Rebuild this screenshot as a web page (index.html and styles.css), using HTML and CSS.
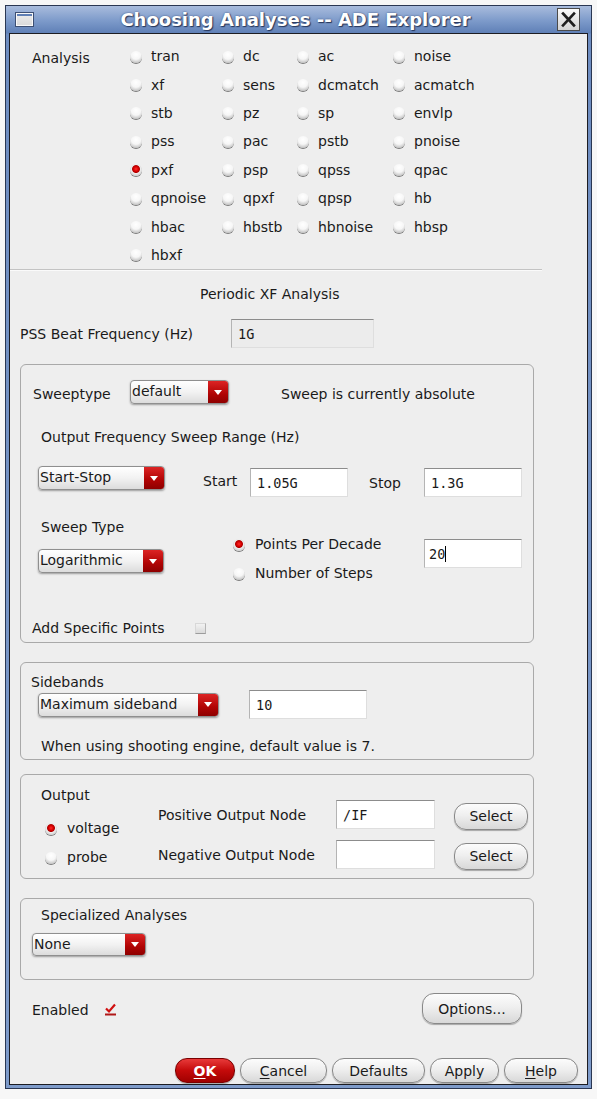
FILE: index.html
```html
<!DOCTYPE html>
<html>
<head>
<meta charset="utf-8">
<title>Choosing Analyses -- ADE Explorer</title>
<link rel="stylesheet" href="styles.css">
</head>
<body>
<div class="window">
  <div class="titlebar">
    <span class="win-icon"></span>
    <span class="title">Choosing Analyses -- ADE Explorer</span>
    <span class="close-btn">
      <svg width="21" height="21" viewBox="0 0 21 21"><path d="M5 4.5 L16 16.5 M16 4.5 L5 16.5" stroke="#1e1e1e" stroke-width="2.6" stroke-linecap="square" fill="none"/></svg>
    </span>
  </div>
  <div class="content">
    <div class="analysis">
      <div class="analysis-label">Analysis</div>
      <div class="analysis-grid">
        <span class="opt"><span class="radio"></span>tran</span>
        <span class="opt"><span class="radio"></span>dc</span>
        <span class="opt"><span class="radio"></span>ac</span>
        <span class="opt"><span class="radio"></span>noise</span>
        <span class="opt"><span class="radio"></span>xf</span>
        <span class="opt"><span class="radio"></span>sens</span>
        <span class="opt"><span class="radio"></span>dcmatch</span>
        <span class="opt"><span class="radio"></span>acmatch</span>
        <span class="opt"><span class="radio"></span>stb</span>
        <span class="opt"><span class="radio"></span>pz</span>
        <span class="opt"><span class="radio"></span>sp</span>
        <span class="opt"><span class="radio"></span>envlp</span>
        <span class="opt"><span class="radio"></span>pss</span>
        <span class="opt"><span class="radio"></span>pac</span>
        <span class="opt"><span class="radio"></span>pstb</span>
        <span class="opt"><span class="radio"></span>pnoise</span>
        <span class="opt"><span class="radio radio-on"></span>pxf</span>
        <span class="opt"><span class="radio"></span>psp</span>
        <span class="opt"><span class="radio"></span>qpss</span>
        <span class="opt"><span class="radio"></span>qpac</span>
        <span class="opt"><span class="radio"></span>qpnoise</span>
        <span class="opt"><span class="radio"></span>qpxf</span>
        <span class="opt"><span class="radio"></span>qpsp</span>
        <span class="opt"><span class="radio"></span>hb</span>
        <span class="opt"><span class="radio"></span>hbac</span>
        <span class="opt"><span class="radio"></span>hbstb</span>
        <span class="opt"><span class="radio"></span>hbnoise</span>
        <span class="opt"><span class="radio"></span>hbsp</span>
        <span class="opt"><span class="radio"></span>hbxf</span>
      </div>
    </div>
    <div class="sep"></div>
    <div class="heading">Periodic XF Analysis</div>
    <div class="pss-row">
      <span class="pss-label">PSS Beat Frequency (Hz)</span>
      <span class="field field-disabled field-pss">1G</span>
    </div>

    <div class="group group-sweep">
      <div class="sw-row1">
        <span class="sw-label">Sweeptype</span>
        <span class="combo combo-sweeptype"><span class="combo-text">default</span><span class="combo-arrow"></span></span>
        <span class="sw-note">Sweep is currently absolute</span>
      </div>
      <div class="sub-title sub-range">Output Frequency Sweep Range (Hz)</div>
      <div class="sw-row3">
        <span class="combo combo-startstop"><span class="combo-text">Start-Stop</span><span class="combo-arrow"></span></span>
        <span class="lbl-start">Start</span>
        <span class="field field-range">1.05G</span>
        <span class="lbl-stop">Stop</span>
        <span class="field field-range">1.3G</span>
      </div>
      <div class="sub-title sub-type">Sweep Type</div>
      <div class="sw-row5">
        <span class="combo combo-log"><span class="combo-text">Logarithmic</span><span class="combo-arrow"></span></span>
        <div class="radio-stack">
          <span class="ropt"><span class="radio radio-on"></span>Points Per Decade</span>
          <span class="ropt"><span class="radio"></span>Number of Steps</span>
        </div>
        <span class="field field-range field-ppd">20<span class="caret"></span></span>
      </div>
      <div class="sw-add">
        <span class="add-label">Add Specific Points</span>
        <span class="checkbox"></span>
      </div>
    </div>

    <div class="group group-side">
      <div class="side-title">Sidebands</div>
      <div class="side-row">
        <span class="combo combo-side"><span class="combo-text">Maximum sideband</span><span class="combo-arrow"></span></span>
        <span class="field field-side">10</span>
      </div>
      <div class="side-note">When using shooting engine, default value is 7.</div>
    </div>

    <div class="group group-out">
      <div class="out-left">
        <div class="out-title">Output</div>
        <span class="ropt ropt-voltage"><span class="radio radio-on"></span>voltage</span>
        <span class="ropt ropt-probe"><span class="radio"></span>probe</span>
      </div>
      <div class="out-right">
        <div class="node-row">
          <span class="node-label">Positive Output Node</span>
          <span class="field field-node">/IF</span>
          <span class="btn btn-select">Select</span>
        </div>
        <div class="node-row node-row2">
          <span class="node-label">Negative Output Node</span>
          <span class="field field-node"></span>
          <span class="btn btn-select">Select</span>
        </div>
      </div>
    </div>

    <div class="group group-spec">
      <div class="spec-title">Specialized Analyses</div>
      <span class="combo combo-none"><span class="combo-text">None</span><span class="combo-arrow"></span></span>
    </div>

    <div class="enabled-row">
      <span class="enabled-label">Enabled</span>
      <span class="check-on">
        <svg width="13" height="13" viewBox="0 0 13 13"><path d="M2 5.5 L5 8.5 L11 1.5" stroke="#d01010" stroke-width="2.2" fill="none"/><path d="M1 11.5 H12" stroke="#b01818" stroke-width="2"/></svg>
      </span>
      <span class="btn btn-options">Options...</span>
    </div>

    <div class="bottom-buttons">
      <span class="btn btn-ok"><u>O</u>K</span>
      <span class="btn btn-cancel"><u>C</u>ancel</span>
      <span class="btn btn-defaults">Defaults</span>
      <span class="btn btn-apply">Apply</span>
      <span class="btn btn-help"><u>H</u>elp</span>
    </div>
  </div>
</div>
</body>
</html>
```

FILE: styles.css
```css
html, body {
  margin: 0;
  padding: 0;
  background: #f7f7f7;
}
body {
  font-family: "DejaVu Sans", "Liberation Sans", sans-serif;
  font-size: 14px;
  color: #1a1a1a;
}
.window {
  margin: 5px 0 0 5px;
  width: 587px;
  height: 1084px;
  box-sizing: border-box;
  border: 1px solid #2a3752;
  background: linear-gradient(#a9bcdd 0px, #7f9ccb 14px, #5f80b7 27px, #6d8cc0 28px, #7e9bca 100%);
  padding: 0 3px 3px 3px;
}
.titlebar {
  height: 27px;
  display: flex;
  align-items: center;
}
.win-icon {
  width: 17px;
  height: 13px;
  margin-left: 6px;
  border: 1px solid #3d4f73;
  background: linear-gradient(#5f7fb5 0 3px, #e9e9e9 3px, #d9d9d9 100%);
  box-shadow: inset 0 0 0 1px #f8f8f8;
}
.title {
  flex: 1;
  text-align: center;
  color: #ffffff;
  font-weight: bold;
  font-size: 18px;
  text-shadow: 1px 1px 1px #26365a, 0 0 2px #3b4f7c;
}
.close-btn {
  width: 21px;
  height: 21px;
  margin-right: 8px;
  border: 1px solid #4a4a4a;
  background: linear-gradient(#fafafa, #d2d2d2);
  display: flex;
}
.content {
  height: 1050px;
  border: 1px solid #1c1c22;
  background: #eeeeee;
  box-sizing: content-box;
}

/* Analysis radio grid */
.analysis {
  display: flex;
  padding-top: 8px;
}
.analysis-label {
  width: 98px;
  margin-left: 22px;
  line-height: 16px;
  padding-top: 8px;
}
.analysis-grid {
  display: grid;
  grid-template-columns: 92px 75px 96px 120px;
  grid-auto-rows: 28.4px;
}
.opt, .ropt {
  display: flex;
  align-items: center;
  gap: 10px;
  white-space: nowrap;
}
.opt { gap: 9px; }
.radio {
  width: 12px;
  height: 12px;
  border-radius: 50%;
  box-sizing: border-box;
  flex: none;
  background: radial-gradient(circle at 50% 30%, #ffffff 0, #f6f6f6 45%, #cfcfcf 72%, #8a8a8a 100%);
  box-shadow: 0 1px 0 #7c7c7c;
  margin-top: 1px;
}
.radio-on {
  background: radial-gradient(circle at 50% 42%, #ff2a2a 0, #d80000 26%, #b00000 38%, #eeeeee 48%, #cfcfcf 72%, #8a8a8a 100%);
}
.sep {
  width: 532px;
  height: 1px;
  background: #c3c3c3;
  border-bottom: 1px solid #fafafa;
}
.heading {
  margin: 15px 0 0 190px;
  line-height: 16px;
}
.pss-row {
  display: flex;
  align-items: center;
  margin: 17px 0 0 10px;
  height: 29px;
}
.pss-label {
  width: 211px;
}

/* fields */
.field {
  box-sizing: border-box;
  height: 29px;
  border: 1px solid #dedede;
  border-top-color: #8c8c8c;
  border-left-color: #b4b4b4;
  background: #ffffff;
  font-family: "DejaVu Sans Mono", "Liberation Mono", monospace;
  font-size: 13.5px;
  padding: 0 6px;
  display: flex;
  align-items: center;
}
.field-disabled {
  background: #ececec;
}
.field-pss { width: 143px; }
.field-range { width: 98px; }
.field-side { width: 118px; margin-left: 30px; }
.field-node { width: 99px; }
.caret {
  display: inline-block;
  width: 1px;
  height: 16px;
  background: #000;
  margin-left: 0;
}

/* combo boxes */
.combo {
  display: flex;
  height: 24px;
  box-sizing: border-box;
  border: 1px solid #8f8f8f;
  border-radius: 4px;
  background: linear-gradient(#ffffff, #f2f2f2 50%, #dcdcdc);
  box-shadow: 0 1px 2px rgba(0, 0, 0, 0.35);
  overflow: hidden;
  flex: none;
}
.combo-text {
  flex: 1;
  padding-left: 1px;
  line-height: 21px;
  white-space: nowrap;
}
.combo-arrow {
  width: 20px;
  background: linear-gradient(#dc2424, #b00404 60%, #8e0000);
  display: flex;
  align-items: center;
  justify-content: center;
}
.combo-arrow::after {
  content: "";
  border-left: 4px solid transparent;
  border-right: 4px solid transparent;
  border-top: 5px solid #ffffff;
}
.combo-sweeptype { width: 99px; }
.combo-startstop { width: 127px; }
.combo-log { width: 126px; }
.combo-side { width: 181px; }
.combo-none { width: 114px; height: 23px; }

/* groups */
.group {
  margin-left: 10px;
  width: 514px;
  box-sizing: border-box;
  border: 1px solid #a9a9a9;
  border-radius: 6px;
}
.group-sweep {
  margin-top: 16px;
  height: 279px;
}
.sw-row1 {
  display: flex;
  align-items: center;
  height: 24px;
  margin-top: 15px;
}
.sw-label {
  margin-left: 12px;
  width: 97px;
  padding-top: 4px;
}
.sw-note {
  margin-left: 52px;
  padding-top: 3px;
}
.sub-title {
  margin-left: 20px;
}
.sub-range {
  margin-top: 25px;
  line-height: 16px;
}
.sw-row3 {
  display: flex;
  align-items: center;
  height: 31px;
  margin-top: 21px;
}
.combo-startstop {
  margin-left: 17px;
  align-self: flex-start;
}
.lbl-start {
  margin-left: 38px;
  width: 47px;
  margin-bottom: 1px;
}
.lbl-stop {
  margin-left: 21px;
  width: 55px;
  margin-top: 3px;
}
.sw-row3 .field { margin-top: 2px; }
.sub-type {
  margin-top: 23px;
  line-height: 14px;
}
.sw-row5 {
  display: flex;
  align-items: flex-start;
  height: 49px;
}
.combo-log {
  margin-left: 17px;
  margin-top: 15px;
}
.radio-stack {
  margin-left: 69px;
  width: 191px;
  display: flex;
  flex-direction: column;
  gap: 9px;
}
.radio-stack .ropt {
  height: 20px;
  gap: 10px;
}
.field-ppd {
  margin-top: 5px;
  padding-left: 4px;
}
.sw-add {
  display: flex;
  align-items: center;
  margin: 37px 0 0 11px;
  height: 16px;
}
.add-label {
  width: 163px;
}
.checkbox {
  width: 11px;
  height: 11px;
  box-sizing: border-box;
  border: 1px solid #d8d8d8;
  border-bottom-color: #9c9c9c;
  border-right-color: #b4b4b4;
  background: linear-gradient(#f2f2f2, #dadada);
}

.group-side {
  margin-top: 19px;
  height: 98px;
}
.side-title {
  margin: 12px 0 0 10px;
  line-height: 14px;
}
.side-row {
  display: flex;
  align-items: center;
  height: 29px;
  margin: 1px 0 0 17px;
}
.side-note {
  margin: 20px 0 0 20px;
  line-height: 14px;
}

.group-out {
  margin-top: 14px;
  height: 105px;
  display: flex;
  align-items: flex-start;
}
.out-left {
  margin: 13px 0 0 20px;
  width: 117px;
  display: flex;
  flex-direction: column;
}
.out-title {
  line-height: 14px;
}
.out-left .ropt {
  height: 20px;
  padding-left: 4px;
}
.ropt-voltage { margin-top: 16px; }
.ropt-probe { margin-top: 9px; }
.out-right {
  margin-top: 25px;
}
.node-row {
  display: flex;
  align-items: center;
  height: 29px;
}
.node-row2 {
  margin-top: 11px;
}
.node-label {
  width: 178px;
}
.btn-select {
  width: 74px;
  height: 27px;
  margin-left: 19px;
  margin-top: 3px;
}

.group-spec {
  margin-top: 19px;
  height: 82px;
}
.spec-title {
  margin: 9px 0 0 20px;
  line-height: 14px;
}
.combo-none {
  display: flex;
  margin: 11px 0 0 11px;
}

.enabled-row {
  display: flex;
  align-items: center;
  height: 31px;
  margin-top: 13px;
}
.enabled-label {
  margin-left: 22px;
  width: 72px;
  padding-top: 3px;
}
.check-on {
  display: flex;
  margin-top: 2px;
}
.btn-options {
  margin-left: auto;
  margin-right: 65px;
  width: 100px;
  height: 31px;
}

/* buttons */
.btn {
  box-sizing: border-box;
  border: 1px solid #888888;
  border-radius: 12px;
  background: linear-gradient(#fcfcfc 0%, #efefef 45%, #d8d8d8 100%);
  box-shadow: 0 1px 1px rgba(0, 0, 0, 0.3);
  display: flex;
  align-items: center;
  justify-content: center;
  white-space: nowrap;
  flex: none;
}
.btn u {
  text-decoration-thickness: 1px;
  text-underline-offset: 2px;
}
.bottom-buttons {
  display: flex;
  justify-content: flex-end;
  gap: 5px;
  margin: 34px 9px 0 0;
}
.bottom-buttons .btn {
  height: 25px;
}
.btn-ok {
  width: 60px;
  background: linear-gradient(#e83a3a, #c40a0a 50%, #a00000);
  border-color: #7a0000;
  color: #ffffff;
  font-weight: bold;
}
.btn-cancel { width: 87px; }
.btn-defaults { width: 93px; }
.btn-apply { width: 69px; }
.btn-help { width: 74px; }
```
